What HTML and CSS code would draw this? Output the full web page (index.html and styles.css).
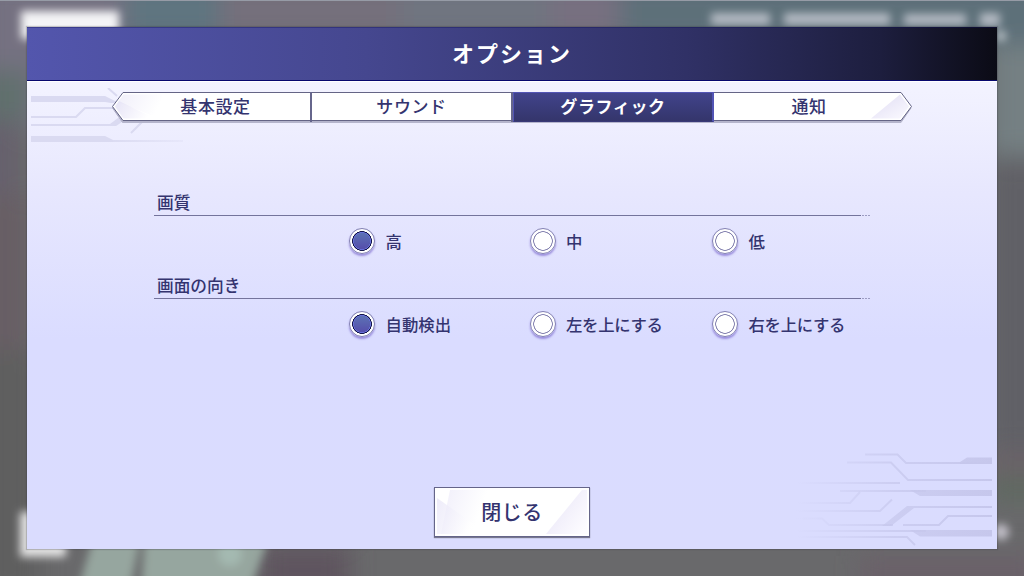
FILE: index.html
```html
<!DOCTYPE html>
<html lang="ja">
<head>
    <meta charset="UTF-8">
    <meta name="viewport" content="width=device-width, initial-scale=1.0">
    <title>オプション</title>
    <link rel="stylesheet" href="styles.css">
</head>
<body>
    <div class="screen">
        <svg class="backdrop" width="1024" height="576" viewBox="0 0 1024 576" aria-hidden="true">
            <defs>
                <filter id="soft" x="-30%" y="-50%" width="160%" height="200%"><feGaussianBlur stdDeviation="4"/></filter>
                <filter id="haze" x="-50%" y="-50%" width="200%" height="200%"><feGaussianBlur stdDeviation="12"/></filter>
            </defs>
            <rect width="1024" height="576" fill="#69696b"/>
            <g filter="url(#haze)">
                <rect x="-20" y="-20" width="145" height="150" fill="#747181"/>
                <rect x="125" y="-20" width="95" height="60" fill="#5f7480"/>
                <rect x="220" y="-20" width="180" height="60" fill="#756f7c"/>
                <rect x="400" y="-20" width="150" height="60" fill="#6f7580"/>
                <rect x="550" y="-20" width="70" height="60" fill="#777080"/>
                <rect x="620" y="-20" width="430" height="65" fill="#5d7079"/>
                <rect x="-20" y="70" width="50" height="55" fill="#61706d"/>
                <rect x="-20" y="120" width="38" height="75" fill="#66606d"/>
                <rect x="-20" y="195" width="50" height="170" fill="#685f65"/>
                <rect x="-20" y="350" width="60" height="250" fill="#5f5f5f"/>
                <rect x="990" y="45" width="60" height="110" fill="#748083"/>
                <rect x="990" y="160" width="60" height="290" fill="#606166"/>
                <rect x="990" y="455" width="60" height="18" fill="#6c6068"/>
                <rect x="990" y="477" width="60" height="22" fill="#5d695f"/>
                <rect x="860" y="556" width="180" height="35" fill="#6b6069"/>
                <rect x="260" y="545" width="90" height="50" fill="#5f555f"/>
            </g>
            <g filter="url(#soft)">
                <rect x="21" y="11" width="98" height="28" fill="#f4f4f6"/>
                <rect x="20" y="512" width="46" height="45" fill="#e3e3e3"/>
                <path d="M94 535H141L130 590H78ZM145 535H270L250 590H141Z" fill="#96a69f"/>
                <circle cx="230" cy="554" r="12" fill="#a4b9b1"/>
                <g fill="#b4bac3">
                    <rect x="711" y="13" width="59" height="12"/>
                    <rect x="784" y="13" width="106" height="12"/>
                    <rect x="904" y="14" width="62" height="11"/>
                    <rect x="980" y="13" width="20" height="13"/>
                </g>
                <circle cx="1001" cy="36" r="5" fill="#c4cbd0"/>
                <circle cx="1001" cy="532" r="8" fill="#c2c0c9"/>
            </g>
            <rect width="1024" height="1" fill="#969ba6"/>
        </svg>

        <div class="dialog">
            <header class="dialog-header">
                <h1>オプション</h1>
            </header>

            <div class="dialog-body">
                <svg class="circuit circuit-top" width="156" height="56" viewBox="0 0 156 56" aria-hidden="true">
                    <defs>
                        <linearGradient id="tailFade" gradientUnits="userSpaceOnUse" x1="75" y1="0" x2="153" y2="0">
                            <stop offset="0" stop-color="#dadaf1"/><stop offset="1" stop-color="#dadaf1" stop-opacity="0.3"/>
                        </linearGradient>
                    </defs>
                    <path d="M0 8H74L84 13H100V15H80L74 14H0Z" fill="#dadaf1"/>
                    <path d="M0 29H45L54 20H86" fill="none" stroke="#dadaf1" stroke-width="2"/>
                    <path d="M0 36H79L87 30H97L85 38H0Z" fill="#dadaf1"/>
                    <path d="M77 0L86 8M100 45L111 34" fill="none" stroke="#dadaf1" stroke-width="2"/>
                    <path d="M0 48H74L82 52V54H0Z" fill="#dadaf1"/>
                    <path d="M81 52H152V54H81Z" fill="url(#tailFade)"/>
                </svg>

                <nav class="tabs">
                    <svg class="tabs-frame" width="800" height="33" viewBox="0 0 800 33" aria-hidden="true">
                        <defs>
                            <linearGradient id="facetLeft" x1="0" y1="0" x2="1" y2="0.3">
                                <stop offset="0" stop-color="#e2dff5"/><stop offset="1" stop-color="#fff"/>
                            </linearGradient>
                            <linearGradient id="facetRight" x1="0.3" y1="0.2" x2="1" y2="1">
                                <stop offset="0" stop-color="#e6e3f6"/><stop offset="1" stop-color="#fbfaff"/>
                            </linearGradient>
                        </defs>
                        <path d="M10.5 2.5L0.5 16L10.5 30.5H789L799 16Z" fill="#b5b5cc" stroke="#b5b5cc"/>
                        <path d="M11 0.5L0.5 14.5L11 28.5H789L799.5 14.5L789 0.5Z" fill="#fff" stroke="#656586"/>
                        <path d="M11.5 2.5H50L46 26L6 10Z" fill="url(#facetLeft)" opacity="0.5"/>
                        <path d="M7 9L43 26.5H11.5L3 14.5Z" fill="url(#facetLeft)" opacity="0.85"/>
                        <path d="M788 2.5L797 14.5L788 26.5H759Z" fill="url(#facetRight)"/>
                    </svg>
                    <button class="tab" type="button">基本設定</button>
                    <button class="tab" type="button">サウンド</button>
                    <button class="tab tab-active" type="button">グラフィック</button>
                    <button class="tab" type="button">通知</button>
                </nav>

                <main class="settings">
                    <section class="setting">
                        <h2>画質</h2>
                        <div class="rule"></div>
                        <div class="choices">
                            <label class="choice"><input type="radio" name="quality" checked>高</label>
                            <label class="choice"><input type="radio" name="quality">中</label>
                            <label class="choice"><input type="radio" name="quality">低</label>
                        </div>
                    </section>
                    <section class="setting">
                        <h2>画面の向き</h2>
                        <div class="rule"></div>
                        <div class="choices">
                            <label class="choice"><input type="radio" name="orientation" checked>自動検出</label>
                            <label class="choice choice-kana"><input type="radio" name="orientation">左を上にする</label>
                            <label class="choice choice-kana"><input type="radio" name="orientation">右を上にする</label>
                        </div>
                    </section>
                </main>

                <svg class="circuit circuit-bottom" width="196" height="96" viewBox="0 0 196 96" aria-hidden="true">
                    <defs>
                        <linearGradient id="lineFade" gradientUnits="userSpaceOnUse" x1="0" y1="0" x2="196" y2="0">
                            <stop offset="0" stop-color="#c6c7ec" stop-opacity="0"/>
                            <stop offset="0.5" stop-color="#c6c7ec" stop-opacity="0.7"/>
                            <stop offset="1" stop-color="#c6c7ec"/>
                        </linearGradient>
                    </defs>
                    <g fill="none" stroke="url(#lineFade)" stroke-width="2">
                        <path d="M69 4.5H101.5L110 13H196"/>
                        <path d="M51 12.5H95L112 30H196"/>
                        <path d="M0 33H104"/>
                        <path d="M44 41H130"/>
                        <path d="M0 53H54L64 42"/>
                        <path d="M0 61H84L96 49.5"/>
                        <path d="M0 68.5H26L33 75H97"/>
                        <path d="M107 75H143L152 66H196"/>
                        <path d="M0 81H130"/>
                        <path d="M0 87H111L119 95"/>
                    </g>
                    <g fill="url(#lineFade)">
                        <path d="M164 12L171 7.5H196V14H164Z"/>
                        <path d="M114 40H196V46H124Z"/>
                        <path d="M86 76L111 56H196V58H118L95 76Z"/>
                        <path d="M114 80H196V86.5H124Z"/>
                    </g>
                </svg>

                <footer class="dialog-footer">
                    <button class="close-button" type="button">
                        <svg class="close-facets" width="154" height="48" viewBox="0 0 154 48" aria-hidden="true">
                            <defs>
                                <linearGradient id="facetA" x1="0" y1="0" x2="1" y2="0.3">
                                    <stop offset="0" stop-color="#e6e3f7"/><stop offset="0.8" stop-color="#fff"/>
                                </linearGradient>
                                <linearGradient id="facetB" x1="0.2" y1="0.2" x2="1" y2="0.8">
                                    <stop offset="0" stop-color="#ebe8f8"/><stop offset="1" stop-color="#fdfcff"/>
                                </linearGradient>
                            </defs>
                            <path d="M15 2H60L52 46H6Z" fill="url(#facetA)" opacity="0.6"/>
                            <path d="M2 10L53 46H2Z" fill="url(#facetA)" opacity="0.7"/>
                            <path d="M147 2H152V46H111Z" fill="url(#facetB)"/>
                        </svg>
                        <span>閉じる</span>
                    </button>
                </footer>
            </div>
        </div>
    </div>
</body>
</html>
```

FILE: styles.css
```css
* {
    box-sizing: border-box;
}

body {
    margin: 0;
    font-family: 'Noto Sans CJK JP', sans-serif;
    color: #34346f;
}

h1, h2 {
    margin: 0;
}

button {
    font-family: inherit;
    color: inherit;
    padding: 0;
    border: none;
    background: none;
}

.screen {
    position: relative;
    display: flex;
    justify-content: center;
    align-items: center;
    width: 1024px;
    height: 576px;
    overflow: hidden;
}

.backdrop {
    position: absolute;
    inset: 0;
}

.dialog {
    position: relative;
    display: flex;
    flex-direction: column;
    width: 970px;
    height: 522px;
    box-shadow: 0 0 1px 1px rgba(50, 50, 60, 0.25);
}

.dialog-header {
    display: flex;
    justify-content: center;
    align-items: center;
    height: 54px;
    background: linear-gradient(to right, #5356ad 0%, #45478f 35%, #303166 68%, #1d1e3e 88%, #0b0b15 100%);
    box-shadow: inset 0 -1px #08086e, inset 0 1px rgba(15, 15, 90, 0.35);
}

.dialog-header h1 {
    padding-bottom: 4px;
    font-size: 22px;
    line-height: 32px;
    letter-spacing: 2px;
    font-weight: 700;
    color: #fff;
}

.dialog-body {
    position: relative;
    flex: 1;
    display: flex;
    flex-direction: column;
    padding-top: 10px;
    border-top: 1px solid #fff;
    background: linear-gradient(#f3f3ff 0%, #e7e7fe 24%, #dadcff 55%, #dadcfe 100%);
}

.circuit {
    position: absolute;
}

.circuit-top {
    left: 4px;
    top: 6px;
}

.circuit-bottom {
    right: 5px;
    bottom: 3px;
}

/* tabs */
.tabs {
    position: relative;
    display: grid;
    grid-template-columns: 200px 201px 201px 198px;
    width: 800px;
    height: 29px;
    margin-left: 85px;
}

.tabs-frame {
    position: absolute;
    left: 0;
    top: 0;
}

.tab {
    position: relative;
    padding-bottom: 2px;
    border-right: 2px solid #66668c;
    font-size: 17px;
    line-height: 26px;
    letter-spacing: 0.6px;
    font-weight: 500;
}

.tab:first-of-type {
    padding-left: 9px;
}

.tab:last-of-type {
    padding-right: 8px;
    border-right: none;
}

.tab-active {
    color: #fff;
    font-weight: 700;
    background: linear-gradient(#41438b, #34356b);
    border: 1px solid #5254b5;
    border-bottom-color: #393a78;
    border-right: 2px solid #5254b5;
}

/* settings */
.settings {
    flex: 1;
    width: 717px;
    margin: 66px 0 0 127px;
}

.setting {
    height: 83px;
}

.setting h2 {
    height: 28px;
    padding-left: 3px;
    font-size: 16.7px;
    line-height: 30px;
    font-weight: 500;
}

.rule {
    width: 716px;
    height: 1px;
    background:
        linear-gradient(#74749c, #74749c) 0 0 / 707px 1px no-repeat,
        repeating-linear-gradient(to right, #9c9cc2 0 2px, transparent 2px 3px);
}

.choices {
    display: grid;
    grid-template-columns: 180.5px 182.5px 159px;
    padding: 12px 0 0 195px;
}

.choice {
    display: flex;
    align-items: center;
    gap: 10.5px;
    height: 26px;
    font-size: 16.4px;
    line-height: 26px;
    font-weight: 500;
    white-space: nowrap;
}

.choice-kana {
    letter-spacing: -0.3px;
}

.choice input {
    appearance: none;
    flex: none;
    width: 26px;
    height: 26px;
    margin: 0;
    border: 1px solid #8381b2;
    border-radius: 50%;
    background: radial-gradient(circle, #fff 8.5px, #8583b0 9px, #8583b0 9.5px, #fff 10px);
    box-shadow: 0 2px 2px rgba(120, 100, 205, 0.65);
}

.choice input:checked {
    background:
        radial-gradient(circle, transparent 8px, #6770da 8.3px, #6770da 8.7px, #15164c 9.1px, #15164c 9.6px, #fff 10.1px),
        linear-gradient(#5c70b4 20%, #5650ac 80%);
}

/* close button */
.dialog-footer {
    display: flex;
    justify-content: center;
    padding-bottom: 12px;
}

.close-button {
    position: relative;
    width: 156px;
    height: 50px;
    border: 1px solid #656589;
    background: #fff;
    box-shadow: 0 1px 1px #77778f;
    font-size: 20px;
    line-height: 30px;
    letter-spacing: 0.5px;
    font-weight: 500;
}

.close-facets {
    position: absolute;
    left: 0;
    top: 0;
}

.close-button span {
    position: relative;
}
```
